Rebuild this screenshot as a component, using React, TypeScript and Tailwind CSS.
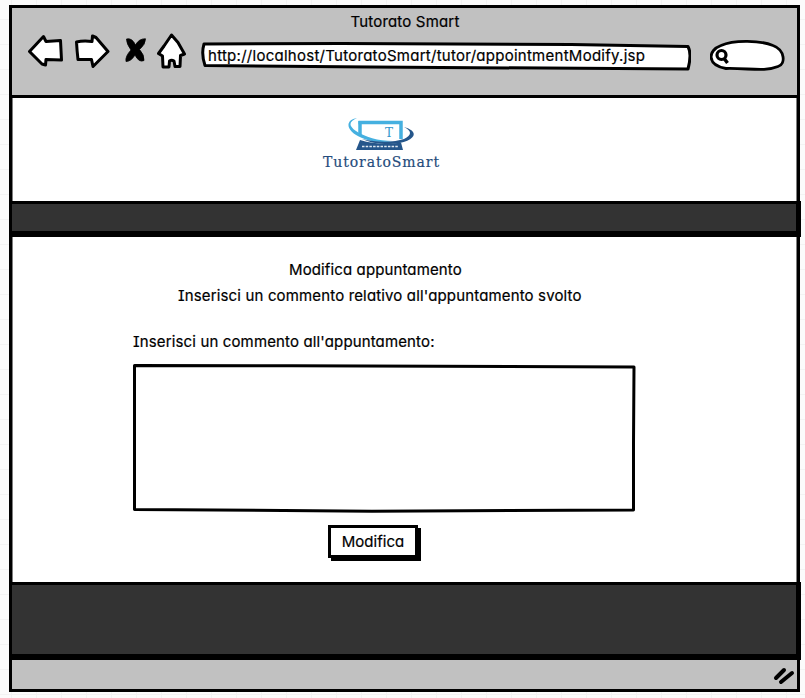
import React from "react";

function BackIcon() {
  return (
    <svg className="block" width="36" height="34" viewBox="0 0 36 34" fill="#fff" stroke="#000" strokeWidth="3" strokeLinejoin="round">
      <path d="M2.500 17.500 L16.500 2.500 L19 7.500 L33.500 6.500 L34.500 26 L19 25.500 L18.500 31 L15 30 Z" />
    </svg>
  );
}

function ForwardIcon() {
  return (
    <svg className="block" width="36" height="36" viewBox="0 0 36 36" fill="#fff" stroke="#000" strokeWidth="3" strokeLinejoin="round">
      <path d="M2.500 9 Q9 7.500 18 8.500 L18.500 3 L22 4.500 L34 18.500 L19 33.500 L17.500 26.500 L4 26.500 Q3 18 2.500 9 Z" />
    </svg>
  );
}

function StopIcon() {
  return (
    <svg className="block" width="22" height="26" viewBox="0 0 22 26" fill="#000" stroke="#000" strokeWidth="0.800" strokeLinejoin="round">
      <path d="M1.500 2 Q7 0.500 10.500 8 Q14 1.500 20.500 1.800 Q20.500 7.500 14.500 12.500 Q19.500 18 19 23.500 Q14 26 10 18 Q6 24.500 1 24.500 Q0 19.500 6 13 Q1.500 7 1.500 2 Z" />
    </svg>
  );
}

function HomeIcon() {
  return (
    <svg className="block" width="29" height="36" viewBox="0 0 29 36" fill="#fff" stroke="#000" strokeWidth="3" strokeLinejoin="round">
      <path d="M14.500 2 L21 9.500 L27.500 21 L23.500 22.500 L23 33.500 L18 33.500 L17 28 Q14.500 26.500 12.500 28 L12 34 L6 34 L5.500 23 L1.500 20.500 L7 13 Z" />
    </svg>
  );
}

function Logo() {
  return (
    <div className="flex flex-col items-center">
      <svg className="block" width="70" height="34" viewBox="0 0 70 34">
        <path d="M13 3 V18" stroke="#45b0e0" strokeWidth="3.500" />
        <path d="M11.500 4.500 H54 V21" fill="none" stroke="#45b0e0" strokeWidth="3.500" />
        <path d="M10 0 C-3 2 -1 14 15 20 C24 24 36 25 46 23 C31 23 18 19 9 13 C1 7 2 4 10 0 Z" fill="#45b0e0" />
        <path d="M57 9 C75 14 67 25 42 26 C30 26 22 24 15 21 C32 25 48 24 57 21 C65 17 65 13 57 9 Z" fill="#25568b" />
        <path d="M13 22 Q33 28 54 24.500 L56 32 H9 Z" fill="#25568b" />
        <path d="M15 28.500 H51" stroke="#dfe8f1" strokeWidth="1.300" strokeDasharray="2.500 1.200" />
        <text x="42" y="19" textAnchor="middle" fontFamily="DejaVu Serif, serif" fontSize="12" fill="#3296cc">T</text>
      </svg>
      <span className="font-['DejaVu_Serif',serif] text-[14px] leading-[20px] tracking-[0.920px] text-[#254c7c]">TutoratoSmart</span>
    </div>
  );
}

export default function App() {
  return (
    <div className="h-[698px] w-[805px] bg-[#fbfbfb] bg-[linear-gradient(to_right,#f3f3f3_1px,transparent_1px),linear-gradient(to_bottom,#f3f3f3_1px,transparent_1px)] bg-[size:25px_25px] bg-[position:11px_19px] pl-[9px] pt-[5px] font-[Inter,sans-serif] text-[15px] text-black [font-feature-settings:'cv11','cv08'] [-webkit-text-stroke:0.2px]">
      <div className="flex h-[687px] w-[791px] flex-col border-[3px] border-black bg-white shadow-[inset_0_0_0_0.5px_#000]">
        <header className="h-[90px] shrink-0 border-b-[3px] border-black bg-[#c1c1c1]">
          <div className="flex h-[26px] items-center justify-center pt-[3px]">
            <h1 className="whitespace-nowrap pl-[1px] text-[15px] tracking-[0.180px]">Tutorato Smart</h1>
          </div>
          <nav className="flex items-start pl-[15px]">
            <BackIcon />
            <div className="-mt-[1px] ml-[11px]"><ForwardIcon /></div>
            <div className="ml-[15px] mt-[3px]"><StopIcon /></div>
            <div className="-mt-[1px] ml-[10px]"><HomeIcon /></div>
            <div className="relative ml-[15px] mt-[7px] flex h-[30px] w-[490px] items-center">
              <svg className="absolute inset-0" width="490" height="30" viewBox="0 0 490 30" fill="#fff" stroke="#000" strokeWidth="3" strokeLinejoin="round">
                <path d="M3 3 Q0 13 4 24.500 L170 26 L487 28 Q491 13 487 5.500 L370 3.500 L140 2.500 Z" />
              </svg>
              <span className="relative whitespace-nowrap pl-[7px] text-[15px] tracking-[0.265px]">http://localhost/TutoratoSmart/tutor/appointmentModify.jsp</span>
            </div>
            <svg className="ml-[19px] mt-[5px] block" width="77" height="34" viewBox="0 0 77 34" fill="#fff" stroke="#000" strokeWidth="2.800">
              <path d="M16 29.500 C-4 26 -2 11 11 6.500 C24 0.500 51 1.500 63 6.500 C75 11 76 25 68 27.500 C55 33 39 29 16 29.500 Z" />
              <circle cx="11.500" cy="16" r="4.500" strokeWidth="3.200" />
              <path d="M14.500 20 L17.500 24" strokeWidth="3.500" />
            </svg>
          </nav>
        </header>
        <section className="flex h-[103px] shrink-0 justify-center pr-[46px] pt-[20px]">
          <Logo />
        </section>
        <div className="-mr-[4px] h-[36px] shrink-0 border-b-[6px] border-r-[5px] border-t-[3px] border-black bg-[#333]" />
        <main className="flex h-[345px] shrink-0 flex-col">
          <p className="mt-[22px] whitespace-nowrap pl-[277px] text-[15px] leading-[22px] tracking-[0.120px]">Modifica appuntamento</p>
          <p className="mt-[4px] whitespace-nowrap pl-[166px] text-[15px] leading-[22px] tracking-[0.150px]">Inserisci un commento relativo all'appuntamento svolto</p>
          <label className="mt-[24px] whitespace-nowrap pl-[121px] text-[15px] leading-[22px] tracking-[0.140px]">Inserisci un commento all'appuntamento:</label>
          <div className="ml-[120px] mt-[10px] h-[150px] w-[504px]">
            <svg className="block" width="504" height="150" viewBox="0 0 504 150" fill="#fff" stroke="#000" strokeWidth="3" strokeLinejoin="round">
              <path d="M2.500 2.500 L160 2.800 L502 4 L501.500 80 L501.500 147 L240 148.200 L2.500 146.500 Z" />
            </svg>
          </div>
          <button className="ml-[316px] mt-[12px] h-[33px] w-[90px] border-[3px] border-black bg-white pt-[1px] text-[15px] leading-[22px] tracking-[0.050px] shadow-[3px_3px_0_#000]">Modifica</button>
        </main>
        <footer className="-mr-[4px] h-[78px] shrink-0 border-b-[6px] border-r-[5px] border-t-[3px] border-black bg-[#333]" />
        <div className="flex flex-1 items-center justify-end bg-[#c1c1c1] pr-[2px] pt-[3px]">
          <svg className="block" width="22" height="18" viewBox="0 0 22 18" stroke="#000" strokeWidth="4" strokeLinecap="round">
            <path d="M3 11 L11 3 M8 15 L19 6" />
          </svg>
        </div>
      </div>
    </div>
  );
}
